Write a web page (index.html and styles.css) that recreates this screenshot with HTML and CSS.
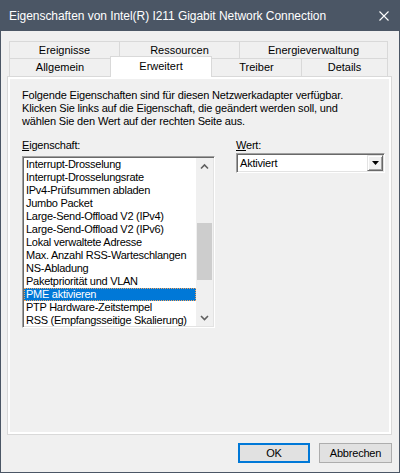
FILE: index.html
```html
<!DOCTYPE html>
<html lang="de">
<head>
    <meta charset="UTF-8">
    <title>Eigenschaften von Intel(R) I211 Gigabit Network Connection</title>
    <link rel="stylesheet" href="styles.css">
</head>
<body>

    <div class="window">
        <div class="titlebar">
            <span class="title">Eigenschaften von Intel(R) I211 Gigabit Network Connection</span>
            <svg class="close" width="10" height="10" viewBox="0 0 10 10">
                <path d="M0.5 0.5 L9.5 9.5 M9.5 0.5 L0.5 9.5" stroke="#fff" stroke-width="1.1" fill="none"/>
            </svg>
        </div>

        <div class="client">
            <div class="tabs">
                <div class="tab-row">
                    <div class="tab tab-ereignisse">Ereignisse</div>
                    <div class="tab tab-ressourcen">Ressourcen</div>
                    <div class="tab tab-energie last">Energieverwaltung</div>
                </div>
                <div class="tab-row row-front">
                    <div class="tab tab-allgemein">Allgemein</div>
                    <div class="tab tab-erweitert selected">Erweitert</div>
                    <div class="tab tab-treiber no-left">Treiber</div>
                    <div class="tab tab-details last">Details</div>
                </div>
            </div>

            <div class="panel">
                <div class="page">
                    <p class="intro">Folgende Eigenschaften sind für diesen Netzwerkadapter verfügbar.<br>
                    Klicken Sie links auf die Eigenschaft, die geändert werden soll, und<br>
                    wählen Sie den Wert auf der rechten Seite aus.</p>

                    <div class="fields">
                        <div class="field">
                            <div class="label"><u>E</u>igenschaft:</div>
                            <div class="listbox">
                                <ul class="items">
                                    <li>Interrupt-Drosselung</li>
                                    <li>Interrupt-Drosselungsrate</li>
                                    <li>IPv4-Prüfsummen abladen</li>
                                    <li>Jumbo Packet</li>
                                    <li>Large-Send-Offload V2 (IPv4)</li>
                                    <li>Large-Send-Offload V2 (IPv6)</li>
                                    <li>Lokal verwaltete Adresse</li>
                                    <li>Max. Anzahl RSS-Warteschlangen</li>
                                    <li>NS-Abladung</li>
                                    <li>Paketpriorität und VLAN</li>
                                    <li class="selected">PME aktivieren</li>
                                    <li>PTP Hardware-Zeitstempel</li>
                                    <li>RSS (Empfangsseitige Skalierung)</li>
                                </ul>
                                <div class="scrollbar">
                                    <div class="arrow">
                                        <svg width="17" height="17" viewBox="0 0 17 17">
                                            <path d="M5 10.5 L8.5 7 L12 10.5" stroke="#606060" stroke-width="1.6" fill="none"/>
                                        </svg>
                                    </div>
                                    <div class="track">
                                        <div class="thumb"></div>
                                    </div>
                                    <div class="arrow">
                                        <svg width="17" height="17" viewBox="0 0 17 17">
                                            <path d="M5 7 L8.5 10.5 L12 7" stroke="#606060" stroke-width="1.6" fill="none"/>
                                        </svg>
                                    </div>
                                </div>
                            </div>
                        </div>

                        <div class="field">
                            <div class="label"><u>W</u>ert:</div>
                            <div class="combo">
                                <span class="combo-text">Aktiviert</span>
                                <span class="combo-button">
                                    <svg width="7" height="4" viewBox="0 0 7 4">
                                        <path d="M0 0 L7 0 L3.5 4 Z" fill="#000"/>
                                    </svg>
                                </span>
                            </div>
                        </div>
                    </div>
                </div>
            </div>

            <div class="buttons">
                <button class="btn default">OK</button>
                <button class="btn">Abbrechen</button>
            </div>
        </div>
    </div>

</body>
</html>
```

FILE: styles.css
```css
body {
    margin: 0;
    font-family: 'Liberation Sans', Arial, sans-serif;
    font-size: 11px;
    color: #000;
    background: #f0f0f0;
}

.window {
    width: 400px;
    height: 473px;
    box-sizing: border-box;
    border: 1px solid #4b5665;
    border-top: none;
    background: #f0f0f0;
    display: flex;
    flex-direction: column;
}

/* Titelleiste */
.titlebar {
    height: 31px;
    flex-shrink: 0;
    background: #4b5665;
    color: #fff;
    display: flex;
    align-items: center;
    justify-content: space-between;
    padding: 0 10px 0 8px;
}

.title {
    font-size: 12px;
    letter-spacing: -0.05px;
}

.client {
    flex: 1;
    padding: 10px 7px 0 6px;
    display: flex;
    flex-direction: column;
}

/* Registerkarten */
.tabs {
    margin: 0 3px 0 2px;
}

.tab-row {
    display: flex;
}

.tab {
    box-sizing: border-box;
    height: 17px;
    line-height: 16px;
    text-align: center;
    border: 1px solid #d9d9d9;
    border-bottom: none;
    border-right: none;
    background: #f0f0f0;
}

.tab.last {
    border-right: 1px solid #d9d9d9;
}

.tab.no-left {
    border-left: none;
}

.row-front .tab {
    height: 18px;
    line-height: 17px;
}

.tab-ereignisse { width: 110px; }
.tab-ressourcen { width: 120px; }
.tab-energie { width: 149px; }
.tab-allgemein { width: 101px; }
.tab-erweitert { width: 102px; }
.tab-treiber { width: 89px; }
.tab-details { width: 87px; }

.row-front .tab.selected {
    position: relative;
    z-index: 1;
    height: 21px;
    margin-top: -2px;
    margin-bottom: -1px;
    line-height: 18px;
    background: #fff;
    border-right: 1px solid #d9d9d9;
}

.panel {
    box-sizing: border-box;
    height: 359px;
    border: 1px solid #d9d9d9;
    background: #fff;
    padding: 2px;
}

.page {
    height: 100%;
    box-sizing: border-box;
    background: #f0f0f0;
    padding: 10px 12px 0 12px;
}

.intro {
    margin: 0;
    line-height: 13px;
    letter-spacing: -0.16px;
}

.fields {
    display: grid;
    grid-template-columns: 193px 149px;
    column-gap: 21px;
    margin-top: 11px;
}

.label {
    line-height: 13px;
    letter-spacing: -0.2px;
}

/* Listenfeld */
.listbox {
    box-sizing: border-box;
    height: 172px;
    margin-top: 4px;
    display: flex;
    background: #fff;
    border: 1px solid;
    border-color: #a0a0a0 #fff #fff #a0a0a0;
    box-shadow: inset 1px 1px 0 #696969, inset -1px -1px 0 #e3e3e3;
    padding: 1px;
}

.items {
    flex: 1;
    list-style: none;
    margin: 0;
    padding: 0;
}

.items li {
    height: 13px;
    line-height: 13px;
    padding-left: 2px;
    white-space: nowrap;
    letter-spacing: -0.27px;
}

.items li.selected {
    background: #0078d7;
    color: #fff;
    outline: 1px dotted #f3a560;
    outline-offset: -1px;
}

.scrollbar {
    width: 17px;
    background: #f0f0f0;
    display: flex;
    flex-direction: column;
}

.arrow {
    height: 17px;
}

.arrow svg {
    display: block;
}

.track {
    flex: 1;
}

.thumb {
    height: 57px;
    margin: 48px 1px 0 1px;
    background: #cdcdcd;
}

/* Kombinationsfeld */
.combo {
    box-sizing: border-box;
    height: 20px;
    margin-top: 1px;
    display: flex;
    align-items: center;
    justify-content: space-between;
    background: #fff;
    border: 1px solid;
    border-color: #a0a0a0 #fff #fff #a0a0a0;
    box-shadow: inset 1px 1px 0 #696969, inset -1px -1px 0 #e3e3e3;
    padding: 1px;
}

.combo-text {
    padding-left: 2px;
    letter-spacing: -0.2px;
}

.combo-button {
    box-sizing: border-box;
    width: 16px;
    height: 16px;
    display: flex;
    align-items: center;
    justify-content: center;
    background: #f0f0f0;
    border: 1px solid;
    border-color: #e3e3e3 #696969 #696969 #e3e3e3;
    box-shadow: inset 1px 1px 0 #fff, inset -1px -1px 0 #a0a0a0;
}

.combo-button svg {
    display: block;
}

/* Schaltflächen */
.buttons {
    display: flex;
    justify-content: flex-end;
    gap: 9px;
    margin-top: 8px;
}

.btn {
    box-sizing: border-box;
    width: 73px;
    height: 20px;
    padding: 0;
    font-family: 'Liberation Sans', Arial, sans-serif;
    font-size: 11px;
    letter-spacing: -0.2px;
    color: #000;
    background: #e1e1e1;
    border: 1px solid #adadad;
}

.btn.default {
    width: 72px;
    border: 2px solid #0078d7;
}
```
